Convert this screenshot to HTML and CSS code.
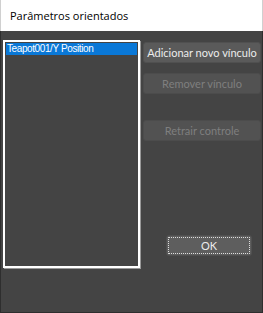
FILE: index.html
```html
<!DOCTYPE html>
<html lang="pt">
<head>
<meta charset="utf-8">
<link rel="stylesheet" href="styles.css">
</head>
<body>
<div class="window">
  <div class="titlebar">Parâmetros orientados</div>
  <div class="content">
    <div class="listbox">
      <div class="item selected">Teapot001/Y Position</div>
    </div>
    <div class="side">
      <button class="btn">Adicionar novo vínculo</button>
      <button class="btn disabled">Remover vínculo</button>
      <button class="btn disabled retract">Retrair controle</button>
      <button class="btn ok">OK</button>
    </div>
  </div>
</div>
</body>
</html>
```
FILE: styles.css
```css
* { box-sizing: border-box; }
html, body { margin: 0; padding: 0; }
body { width: 263px; height: 313px; overflow: hidden; background: #444; }
.window {
  width: 263px; height: 313px;
  display: flex; flex-direction: column;
  font-family: "Lato", "Noto Sans", sans-serif;
}
.titlebar {
  height: 31px; background: #fff; color: #000;
  font-family: "Open Sans", sans-serif;
  font-size: 11px; line-height: 31px; padding-left: 9px;
  border-left: 1px solid #d0d0d0; border-right: 1px solid #d0d0d0;
}
.content {
  flex: 1; background: #444;
  border-left: 1px solid #2e2e2e; border-right: 1px solid #2e2e2e; border-bottom: 1px solid #2e2e2e;
  display: flex; padding: 9px 1px 0 2px;
}
.listbox {
  width: 137px; height: 228px;
  border: 2px solid #fff;
  box-shadow: 1px 1px 0 #999;
  padding: 1px;
  background: #444;
}
.item {
  height: 12px; font-size: 10px; line-height: 12px; padding-left: 1px;
  letter-spacing: -0.4px;
  font-family: "Liberation Sans", sans-serif; color: #fff; white-space: nowrap;
}
.item.selected { background: #0a78d7; }
.side {
  margin-left: 3px; width: 118px;
  display: flex; flex-direction: column; padding-top: 2px;
}
.btn {
  height: 21px; width: 118px; border: 1px solid #505050; border-radius: 3px;
  background: #5a5a5a; color: #ececec; white-space: nowrap;
  font-family: inherit; font-size: 11px; padding: 0;
}
.btn.disabled { color: #7f7f7f; background: #525252; border-color: #4c4c4c; margin-top: 10px; }
.btn.retract { margin-top: 26px; }
.btn.ok {
  margin-top: 94px; margin-left: 23px; width: 86px; height: 21px;
  background: #5e5e5e; outline: 1px dotted #ddd; outline-offset: -3px;
}
```
